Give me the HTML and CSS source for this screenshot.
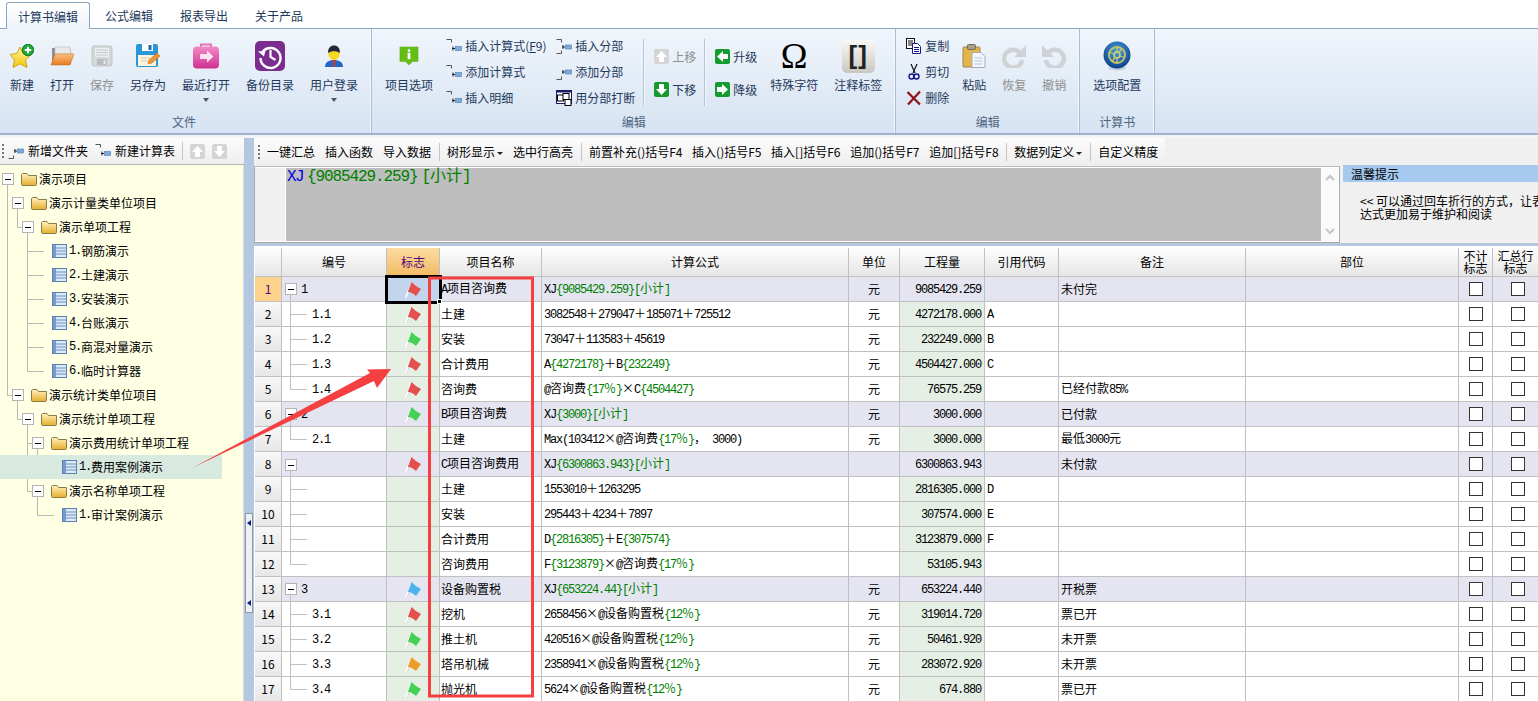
FILE: index.html
```html
<!DOCTYPE html>
<html lang="zh-CN">
<head>
<meta charset="utf-8">
<title>计算书编辑</title>
<link rel="stylesheet" href="styles.css">
</head>
<body>
<svg class="sprite" aria-hidden="true">
  <defs>
    <linearGradient id="gStar" x1="0" y1="0" x2="0" y2="1"><stop offset="0" stop-color="#fff59a"/><stop offset="1" stop-color="#f2c40a"/></linearGradient>
    <linearGradient id="gOrange" x1="0" y1="0" x2="0" y2="1"><stop offset="0" stop-color="#fbc27e"/><stop offset="1" stop-color="#e9791c"/></linearGradient>
    <linearGradient id="gPink" x1="0" y1="0" x2="0" y2="1"><stop offset="0" stop-color="#f48ac6"/><stop offset="1" stop-color="#cf2f91"/></linearGradient>
    <linearGradient id="gFolder" x1="0" y1="0" x2="0" y2="1"><stop offset="0" stop-color="#fff3bf"/><stop offset="1" stop-color="#e8ad2c"/></linearGradient>
    <radialGradient id="gBall" cx="0.5" cy="0.35" r="0.65"><stop offset="0" stop-color="#4aa3e0"/><stop offset="1" stop-color="#0b3f86"/></radialGradient>
  </defs>
  <symbol id="i-new" viewBox="0 0 24 24">
    <polygon points="10,3 13,9.500 21,10.500 15.500,16 17,23.500 10,19.800 3,23.500 4.500,16 0,10.500 7,9.500" fill="url(#gStar)" stroke="#cfa41a"/>
    <circle cx="18" cy="6" r="5.800" fill="#1fa83a" stroke="#0f7d27"/>
    <path d="M18 2.800v6.400M14.800 6h6.400" stroke="#fff" stroke-width="2"/>
  </symbol>
  <symbol id="i-open" viewBox="0 0 24 24">
    <path d="M2 4h7l2 2h10v14H2z" fill="#8f8f8f"/>
    <path d="M5 3l15 0 1 7H5z" fill="#e8e8e8" stroke="#b8b8b8" stroke-width=".6"/>
    <path d="M1 21L5 10h19l-4 11z" fill="url(#gOrange)" stroke="#b9682a" stroke-width=".5"/>
  </symbol>
  <symbol id="i-save" viewBox="0 0 24 24">
    <rect x="2" y="2" width="20" height="20" rx="2" fill="#d5d8da" stroke="#c2c5c8"/>
    <rect x="5" y="4" width="14" height="9" fill="#eceeef"/>
    <path d="M6 6h12M6 8.500h12M6 11h12" stroke="#c6c9cb"/>
    <rect x="7" y="15" width="10" height="6" fill="#b9bcbf"/>
    <rect x="13.500" y="16" width="2" height="4" fill="#e4e6e7"/>
  </symbol>
  <symbol id="i-saveas" viewBox="0 0 24 24">
    <rect x="0" y="0" width="22" height="23" rx="2" fill="#2b95d6"/>
    <rect x="6" y="0" width="11" height="7" fill="#fff"/>
    <rect x="12.500" y="1" width="3" height="5" fill="#1c6ca8"/>
    <rect x="2" y="11" width="18" height="11" fill="#fbf4dc"/>
    <path d="M5 14h9M5 17h7" stroke="#cfc8ae"/>
    <path d="M12 20l1-4 8-7 3 3-8 7z" fill="#ee9330" stroke="#c8621a" stroke-width=".5"/>
  </symbol>
  <symbol id="i-recent" viewBox="0 0 28 28">
    <path d="M9 5V2.500h10V5" fill="none" stroke="#e373b4" stroke-width="2"/>
    <rect x="1" y="4.500" width="26" height="22" rx="4" fill="url(#gPink)"/>
    <path d="M8 12h7V8.500l6.500 6L15 20.500V17H8z" fill="#fbe2f0"/>
  </symbol>
  <symbol id="i-backup" viewBox="0 0 30 30">
    <rect width="30" height="30" rx="5" fill="#7a2c8f"/>
    <path d="M7.500 11A10 10 0 1 1 5.500 17" fill="none" stroke="#fff" stroke-width="2.400"/>
    <path d="M3 10.500l7.500-1-1.500 6z" fill="#fff"/>
    <path d="M15.500 9v7l5 3" fill="none" stroke="#fff" stroke-width="2.200"/>
  </symbol>
  <symbol id="i-user" viewBox="0 0 20 24">
    <path d="M1 23c0-5 4-7 9-7s9 2 9 7z" fill="#2366c4"/>
    <path d="M8.500 16h3l-.8 7H9.300z" fill="#d83a2a"/>
    <ellipse cx="10" cy="9" rx="5.800" ry="7" fill="#f6d91d"/>
    <path d="M4.200 9C3.700 4 6.500 1.500 10 1.500S16.300 4 15.800 9C13 6.500 7 6.500 4.200 9z" fill="#23283a"/>
  </symbol>
  <symbol id="i-info" viewBox="0 0 22 24">
    <path d="M1 2h20v16h-6l-4 4-4-4H1z" fill="#65bd17" stroke="#5aa814" stroke-width=".5"/>
    <circle cx="11" cy="6" r="1.500" fill="#fff"/>
    <rect x="9.500" y="8.500" width="3" height="7" fill="#fff"/>
  </symbol>
  <symbol id="s-top" viewBox="0 0 16 16">
    <path d="M0.500 1.500h5v3" fill="none" stroke="#555"/>
    <path d="M6 10.500h3" stroke="#222"/>
    <path d="M7 8.500v4" stroke="#222" stroke-width="1"/>
    <rect x="9.500" y="8.500" width="6" height="4" fill="#7fa9dc" stroke="#5b84bb" stroke-width=".7"/>
  </symbol>
  <symbol id="s-both" viewBox="0 0 16 16">
    <path d="M0.500 1.500h5v3M0.500 15.500h5v-3" fill="none" stroke="#555"/>
    <path d="M6 9h3M7 7v4" stroke="#222"/>
    <rect x="9.500" y="7" width="6" height="4" fill="#7fa9dc" stroke="#5b84bb" stroke-width=".7"/>
  </symbol>
  <symbol id="s-bottom" viewBox="0 0 16 16">
    <path d="M0.500 15.500h5v-3" fill="none" stroke="#555"/>
    <path d="M6 8h3M7 6v4" stroke="#222"/>
    <rect x="9.500" y="6" width="6" height="4" fill="#7fa9dc" stroke="#5b84bb" stroke-width=".7"/>
  </symbol>
  <symbol id="s-break" viewBox="0 0 16 16">
    <rect x=".5" y=".5" width="15" height="13" fill="#fff" stroke="#1a1a6a"/>
    <rect x=".5" y=".5" width="15" height="2" fill="#1a1a6a"/>
    <rect x="1.500" y="5" width="6" height="6" fill="#fff" stroke="#000"/>
    <rect x="7" y="3.500" width="6" height="6" fill="#fff" stroke="#000"/>
    <rect x="9" y="9.500" width="6" height="6" fill="#fff" stroke="#000"/>
  </symbol>
  <symbol id="a-up" viewBox="0 0 15 15"><rect width="15" height="15" rx="2" fill="currentColor"/><path d="M7.500 2L13 8H10v5H5V8H2z" fill="#fff"/></symbol>
  <symbol id="a-down" viewBox="0 0 15 15"><rect width="15" height="15" rx="2" fill="currentColor"/><path d="M7.500 13L13 7H10V2H5v5H2z" fill="#fff"/></symbol>
  <symbol id="a-left" viewBox="0 0 15 15"><rect width="15" height="15" rx="2" fill="currentColor"/><path d="M2 7.500L8 2v3h5v5H8v3z" fill="#fff"/></symbol>
  <symbol id="a-right" viewBox="0 0 15 15"><rect width="15" height="15" rx="2" fill="currentColor"/><path d="M13 7.500L7 2v3H2v5h5v3z" fill="#fff"/></symbol>
  <symbol id="s-copy" viewBox="0 0 16 16">
    <rect x=".5" y=".5" width="8" height="10" fill="#fff" stroke="#111"/>
    <path d="M2 3h5M2 5h5M2 7h5" stroke="#111"/>
    <path d="M6.500 5.500h5l3 3v7h-8z" fill="#fff" stroke="#16168a"/>
    <path d="M8 9.500h5M8 11.500h5M8 13.500h5" stroke="#16168a"/>
  </symbol>
  <symbol id="s-cut" viewBox="0 0 16 16">
    <path d="M5 0l4 9M11 0L7 9" stroke="#111" stroke-width="1.200" fill="none"/>
    <circle cx="5.500" cy="12.500" r="2.500" fill="none" stroke="#16168a" stroke-width="1.400"/>
    <circle cx="10.500" cy="12.500" r="2.500" fill="none" stroke="#16168a" stroke-width="1.400"/>
  </symbol>
  <symbol id="s-del" viewBox="0 0 16 16">
    <path d="M1.500 2L14 14.500M14 1.500L2 14.500" stroke="#8c1313" stroke-width="2.200"/>
  </symbol>
  <symbol id="i-paste" viewBox="0 0 24 24">
    <rect x="1" y="3" width="17" height="20" rx="1" fill="#e3b54a" stroke="#9e8750"/>
    <rect x="5.500" y="0.500" width="8" height="5" rx="1" fill="#a9a08a" stroke="#6f6a5c"/>
    <path d="M10 8.500h9l4 4v11H10z" fill="#f6f7fa" stroke="#a7adb8"/>
    <path d="M12.500 14h8M12.500 17h8M12.500 20h8" stroke="#b7c4d6"/>
  </symbol>
  <symbol id="i-redo" viewBox="0 0 24 24">
    <path d="M18 9A9 9 0 1 0 20 16" fill="none" stroke="#d0d3d5" stroke-width="4.500"/>
    <path d="M24 1v12H12z" fill="#d0d3d5"/>
  </symbol>
  <symbol id="i-undo" viewBox="0 0 24 24">
    <path d="M6 9A9 9 0 1 1 4 16" fill="none" stroke="#d0d3d5" stroke-width="4.500"/>
    <path d="M0 1v12H12z" fill="#d0d3d5"/>
  </symbol>
  <symbol id="i-gear" viewBox="0 0 28 30">
    <ellipse cx="14" cy="27" rx="9" ry="2.500" fill="#c5d2de"/>
    <circle cx="14" cy="14" r="13.500" fill="url(#gBall)"/>
    <circle cx="14" cy="14" r="8" fill="none" stroke="#c9c566" stroke-width="1.800"/>
    <circle cx="14" cy="14" r="3" fill="none" stroke="#d9d56f" stroke-width="1.500"/>
    <path d="M14 6v5M14 17v5M6.400 11.500l4.700 1.500M17 15l4.600 1.500M9 20.500l3-4M16 11.500l3-4" stroke="#c9c566" stroke-width="1.300"/>
  </symbol>
  <symbol id="t-folder" viewBox="0 0 16 14">
    <path d="M.5 2.500V12.500c0 .5.500 1 1 1h13c.5 0 1-.5 1-1v-9h-8l-1.500-2H1.500z" fill="url(#gFolder)" stroke="#8a7a4a"/>
  </symbol>
  <symbol id="t-table" viewBox="0 0 15 14">
    <rect x=".5" y=".5" width="14" height="13" fill="#dce9f8" stroke="#5c7fb5"/>
    <rect x="1" y="1" width="3" height="12" fill="#7c9fd2"/>
    <path d="M1 4h13M1 7h13M1 10h13" stroke="#6d90c4"/>
  </symbol>
  <symbol id="flag" viewBox="0 0 17 17">
    <path d="M1 16.500L6.500 3" stroke="#fff" stroke-width="2"/>
    <path d="M2 16.500L7 4" stroke="#cfcfcf" stroke-width=".8"/>
    <path d="M6.500 1Q10 5 16 8L11 15Q6 10.500 2.800 11z" fill="currentColor"/>
  </symbol>
</svg>

<header class="tabs">
  <div class="tab on">计算书编辑</div>
  <div class="tab">公式编辑</div>
  <div class="tab">报表导出</div>
  <div class="tab">关于产品</div>
</header>

<section class="ribbon">
  <div class="group g1">
    <div class="gbody">
      <div class="big"><span class="ico"><svg class="i24"><use href="#i-new"/></svg></span><span class="lb">新建</span></div>
      <div class="big"><span class="ico"><svg class="i24"><use href="#i-open"/></svg></span><span class="lb">打开</span></div>
      <div class="big off"><span class="ico"><svg class="i24"><use href="#i-save"/></svg></span><span class="lb">保存</span></div>
      <div class="big"><span class="ico"><svg class="i24"><use href="#i-saveas"/></svg></span><span class="lb">另存为</span></div>
      <div class="big"><span class="ico"><svg class="i28"><use href="#i-recent"/></svg></span><span class="lb">最近打开</span><span class="car"></span></div>
      <div class="big"><span class="ico"><svg class="i30"><use href="#i-backup"/></svg></span><span class="lb">备份目录</span></div>
      <div class="big"><span class="ico"><svg class="iu"><use href="#i-user"/></svg></span><span class="lb">用户登录</span><span class="car"></span></div>
    </div>
    <div class="gname">文件</div>
  </div>
  <div class="group">
    <div class="gbody">
      <div class="big"><span class="ico"><svg class="iu"><use href="#i-info"/></svg></span><span class="lb">项目选项</span></div>
      <div class="col c1">
        <div class="sm"><svg class="i16"><use href="#s-top"/></svg><span>插入计算式(<u>F</u>9)</span></div>
        <div class="sm"><svg class="i16"><use href="#s-top"/></svg>添加计算式</div>
        <div class="sm"><svg class="i16"><use href="#s-top"/></svg>插入明细</div>
      </div>
      <div class="col c2">
        <div class="sm"><svg class="i16"><use href="#s-both"/></svg>插入分部</div>
        <div class="sm"><svg class="i16"><use href="#s-bottom"/></svg>添加分部</div>
        <div class="sm"><svg class="i16"><use href="#s-break"/></svg>用分部打断</div>
      </div>
      <div class="rsep"></div>
      <div class="col mv c3">
        <div class="sm off"><svg class="i15 gray"><use href="#a-up"/></svg>上移</div>
        <div class="sm"><svg class="i15 green"><use href="#a-down"/></svg>下移</div>
      </div>
      <div class="rsep"></div>
      <div class="col mv c4">
        <div class="sm"><svg class="i15 green"><use href="#a-left"/></svg>升级</div>
        <div class="sm"><svg class="i15 green"><use href="#a-right"/></svg>降级</div>
      </div>
      <div class="big"><span class="ico omega">Ω</span><span class="lb">特殊字符</span></div>
      <div class="big"><span class="ico"><span class="brk">[]</span></span><span class="lb">注释标签</span></div>
    </div>
    <div class="gname">编辑</div>
  </div>
  <div class="group">
    <div class="gbody">
      <div class="col c5">
        <div class="sm"><svg class="i16"><use href="#s-copy"/></svg>复制</div>
        <div class="sm"><svg class="i16"><use href="#s-cut"/></svg>剪切</div>
        <div class="sm"><svg class="i16"><use href="#s-del"/></svg>删除</div>
      </div>
      <div class="big"><span class="ico"><svg class="i24"><use href="#i-paste"/></svg></span><span class="lb">粘贴</span></div>
      <div class="big off"><span class="ico"><svg class="i24"><use href="#i-redo"/></svg></span><span class="lb">恢复</span></div>
      <div class="big off"><span class="ico"><svg class="i24"><use href="#i-undo"/></svg></span><span class="lb">撤销</span></div>
    </div>
    <div class="gname">编辑</div>
  </div>
  <div class="group">
    <div class="gbody">
      <div class="big"><span class="ico"><svg class="igear"><use href="#i-gear"/></svg></span><span class="lb">选项配置</span></div>
    </div>
    <div class="gname">计算书</div>
  </div>
</section>

<main class="main">
  <aside class="left">
    <div class="tb ltb">
      <span class="grip"></span>
      <span class="tbi"><svg class="i16"><use href="#s-bottom"/></svg>新增文件夹</span>
      <span class="tbi"><svg class="i16"><use href="#s-top"/></svg>新建计算表</span>
      <span class="tsep"></span>
      <svg class="i15 gray"><use href="#a-up"/></svg>
      <svg class="i15 gray"><use href="#a-down"/></svg>
    </div>
    <div class="tree">
      <svg class="tlines" width="244" height="536" viewBox="0 165 244 536" aria-hidden="true">
        <path d="M7.500 185V395.500H12M17.500 209V227.500H22M27.500 233V371.500H44M27.500 251.500H44M27.500 275.500H44M27.500 299.500H44M27.500 323.500H44M27.500 347.500H44M17.500 401V419.500H22M27.500 425V491.500H32M27.500 443.500H32M37.500 449V467.500H54M37.500 497V515.500H54" fill="none" stroke="#b9b9b9"/>
      </svg>
      <div class="node l0"><span class="ex"></span><svg class="fld"><use href="#t-folder"/></svg>演示项目</div>
      <div class="node l1"><span class="ex"></span><svg class="fld"><use href="#t-folder"/></svg>演示计量类单位项目</div>
      <div class="node l2"><span class="ex"></span><svg class="fld"><use href="#t-folder"/></svg>演示单项工程</div>
      <div class="node l2 leaf"><svg class="tbl"><use href="#t-table"/></svg><code>1.</code>钢筋演示</div>
      <div class="node l2 leaf"><svg class="tbl"><use href="#t-table"/></svg><code>2.</code>土建演示</div>
      <div class="node l2 leaf"><svg class="tbl"><use href="#t-table"/></svg><code>3.</code>安装演示</div>
      <div class="node l2 leaf"><svg class="tbl"><use href="#t-table"/></svg><code>4.</code>台账演示</div>
      <div class="node l2 leaf"><svg class="tbl"><use href="#t-table"/></svg><code>5.</code>商混对量演示</div>
      <div class="node l2 leaf"><svg class="tbl"><use href="#t-table"/></svg><code>6.</code>临时计算器</div>
      <div class="node l1"><span class="ex"></span><svg class="fld"><use href="#t-folder"/></svg>演示统计类单位项目</div>
      <div class="node l2"><span class="ex"></span><svg class="fld"><use href="#t-folder"/></svg>演示统计单项工程</div>
      <div class="node l3"><span class="ex"></span><svg class="fld"><use href="#t-folder"/></svg>演示费用统计单项工程</div>
      <div class="node l3 leaf cur"><svg class="tbl"><use href="#t-table"/></svg><code>1.</code>费用案例演示</div>
      <div class="node l3"><span class="ex"></span><svg class="fld"><use href="#t-folder"/></svg>演示名称单项工程</div>
      <div class="node l3 leaf"><svg class="tbl"><use href="#t-table"/></svg><code>1.</code>审计案例演示</div>
    </div>
  </aside>

  <div class="split"><div class="collapse"><span class="tri"></span><span class="tri"></span></div></div>

  <div class="right">
    <div class="tbwrap">
      <div class="tb rtb">
        <span class="grip"></span>
        <span>一键汇总</span><span>插入函数</span><span>导入数据</span>
        <span class="tsep"></span>
        <span>树形显示<span class="dd"></span></span><span>选中行高亮</span>
        <span class="tsep"></span>
        <span class="fk">前置补充()括号F4</span><span class="fk">插入()括号F5</span><span class="fk">插入[]括号F6</span><span class="fk">追加()括号F7</span><span class="fk">追加[]括号F8</span>
        <span class="tsep"></span>
        <span>数据列定义<span class="dd"></span></span>
        <span class="tsep"></span>
        <span>自定义精度</span>
      </div>
    </div>
    <div class="upper">
      <div class="fbox">
        <div class="gutter"></div>
        <div class="ftext"><span class="fx">XJ</span><span class="fg"><span class="fm">{9085429.259}</span><span class="fm fb">[</span>小计<span class="fm">]</span></span></div>
        <div class="vscroll">
          <svg width="10" height="7" viewBox="0 0 10 7"><path d="M1 6l4-4 4 4" fill="none" stroke="#c4c4c4" stroke-width="2"/></svg>
          <svg width="10" height="7" viewBox="0 0 10 7"><path d="M1 1l4 4 4-4" fill="none" stroke="#c4c4c4" stroke-width="2"/></svg>
        </div>
      </div>
      <div class="tip">
        <div class="tiph">温馨提示</div>
        <div class="tipb">&lt;&lt; 可以通过回车折行的方式，让表<br>达式更加易于维护和阅读</div>
      </div>
    </div>
    <div class="gridwrap">
      <table class="grid">
        <colgroup>
          <col class="c-h"><col class="c-no"><col class="c-fl"><col class="c-nm"><col class="c-fo"><col class="c-un"><col class="c-qt"><col class="c-cd"><col class="c-nt"><col class="c-pt"><col class="c-k1"><col class="c-k2">
        </colgroup>
        <thead>
          <tr><th></th><th>编号</th><th class="act">标志</th><th>项目名称</th><th>计算公式</th><th>单位</th><th>工程量</th><th>引用代码</th><th>备注</th><th>部位</th><th class="two">不计<br>标志</th><th class="two">汇总行<br>标志</th></tr>
        </thead>
        <tbody>
          <tr class="grp"><th class="rh act">1</th><td class="no par"><span class="ex"></span><code>1</code></td><td class="fl sel"><svg class="flag red"><use href="#flag"/></svg><span class="handle"></span></td><td class="nm"><code>A</code>项目咨询费</td><td class="fo"><code>XJ</code><span class="g"><code>{9085429.259}[</code>小计<code>]</code></span></td><td class="un">元</td><td class="qt"><code>9085429.259</code></td><td class="cd"></td><td class="nt">未付完</td><td></td><td class="k"><input type="checkbox"></td><td class="k k2"><input type="checkbox"></td></tr>
          <tr><th class="rh">2</th><td class="no ch"><code>1.1</code></td><td class="fl"><svg class="flag red"><use href="#flag"/></svg></td><td class="nm">土建</td><td class="fo"><code>3082548</code>＋<code>279047</code>＋<code>185071</code>＋<code>725512</code></td><td class="un">元</td><td class="qt"><code>4272178.000</code></td><td class="cd"><code>A</code></td><td class="nt"></td><td></td><td class="k"><input type="checkbox"></td><td class="k k2"><input type="checkbox"></td></tr>
          <tr><th class="rh">3</th><td class="no ch"><code>1.2</code></td><td class="fl"><svg class="flag green"><use href="#flag"/></svg></td><td class="nm">安装</td><td class="fo"><code>73047</code>＋<code>113583</code>＋<code>45619</code></td><td class="un">元</td><td class="qt"><code>232249.000</code></td><td class="cd"><code>B</code></td><td class="nt"></td><td></td><td class="k"><input type="checkbox"></td><td class="k k2"><input type="checkbox"></td></tr>
          <tr><th class="rh">4</th><td class="no ch"><code>1.3</code></td><td class="fl"><svg class="flag red"><use href="#flag"/></svg></td><td class="nm">合计费用</td><td class="fo"><code>A</code><span class="g"><code>{4272178}</code></span>＋<code>B</code><span class="g"><code>{232249}</code></span></td><td class="un">元</td><td class="qt"><code>4504427.000</code></td><td class="cd"><code>C</code></td><td class="nt"></td><td></td><td class="k"><input type="checkbox"></td><td class="k k2"><input type="checkbox"></td></tr>
          <tr><th class="rh">5</th><td class="no ch last"><code>1.4</code></td><td class="fl"><svg class="flag red"><use href="#flag"/></svg></td><td class="nm">咨询费</td><td class="fo"><code>@</code>咨询费<span class="g"><code>{17</code>％<code>}</code></span><span class="x">×</span><code>C</code><span class="g"><code>{4504427}</code></span></td><td class="un">元</td><td class="qt"><code>76575.259</code></td><td class="cd"></td><td class="nt">已经付款<code>85%</code></td><td></td><td class="k"><input type="checkbox"></td><td class="k k2"><input type="checkbox"></td></tr>
          <tr class="grp"><th class="rh">6</th><td class="no par"><span class="ex"></span><code>2</code></td><td class="fl"><svg class="flag green"><use href="#flag"/></svg></td><td class="nm"><code>B</code>项目咨询费</td><td class="fo"><code>XJ</code><span class="g"><code>{3000}[</code>小计<code>]</code></span></td><td class="un">元</td><td class="qt"><code>3000.000</code></td><td class="cd"></td><td class="nt">已付款</td><td></td><td class="k"><input type="checkbox"></td><td class="k k2"><input type="checkbox"></td></tr>
          <tr><th class="rh">7</th><td class="no ch last"><code>2.1</code></td><td class="fl"></td><td class="nm">土建</td><td class="fo"><code>Max(103412</code><span class="x">×</span><code>@</code>咨询费<span class="g"><code>{17</code>％<code>}</code></span>，<code>&nbsp;3000)</code></td><td class="un">元</td><td class="qt"><code>3000.000</code></td><td class="cd"></td><td class="nt">最低<code>3000</code>元</td><td></td><td class="k"><input type="checkbox"></td><td class="k k2"><input type="checkbox"></td></tr>
          <tr class="grp"><th class="rh">8</th><td class="no par"><span class="ex"></span></td><td class="fl"><svg class="flag red"><use href="#flag"/></svg></td><td class="nm"><code>C</code>项目咨询费用</td><td class="fo"><code>XJ</code><span class="g"><code>{6300863.943}[</code>小计<code>]</code></span></td><td class="un"></td><td class="qt"><code>6300863.943</code></td><td class="cd"></td><td class="nt">未付款</td><td></td><td class="k"><input type="checkbox"></td><td class="k k2"><input type="checkbox"></td></tr>
          <tr><th class="rh">9</th><td class="no ch"></td><td class="fl"></td><td class="nm">土建</td><td class="fo"><code>1553010</code>＋<code>1263295</code></td><td class="un"></td><td class="qt"><code>2816305.000</code></td><td class="cd"><code>D</code></td><td class="nt"></td><td></td><td class="k"><input type="checkbox"></td><td class="k k2"><input type="checkbox"></td></tr>
          <tr><th class="rh">10</th><td class="no ch"></td><td class="fl"></td><td class="nm">安装</td><td class="fo"><code>295443</code>＋<code>4234</code>＋<code>7897</code></td><td class="un"></td><td class="qt"><code>307574.000</code></td><td class="cd"><code>E</code></td><td class="nt"></td><td></td><td class="k"><input type="checkbox"></td><td class="k k2"><input type="checkbox"></td></tr>
          <tr><th class="rh">11</th><td class="no ch"></td><td class="fl"></td><td class="nm">合计费用</td><td class="fo"><code>D</code><span class="g"><code>{2816305}</code></span>＋<code>E</code><span class="g"><code>{307574}</code></span></td><td class="un"></td><td class="qt"><code>3123879.000</code></td><td class="cd"><code>F</code></td><td class="nt"></td><td></td><td class="k"><input type="checkbox"></td><td class="k k2"><input type="checkbox"></td></tr>
          <tr><th class="rh">12</th><td class="no ch last"></td><td class="fl"></td><td class="nm">咨询费用</td><td class="fo"><code>F</code><span class="g"><code>{3123879}</code></span><span class="x">×</span><code>@</code>咨询费<span class="g"><code>{17</code>％<code>}</code></span></td><td class="un"></td><td class="qt"><code>53105.943</code></td><td class="cd"></td><td class="nt"></td><td></td><td class="k"><input type="checkbox"></td><td class="k k2"><input type="checkbox"></td></tr>
          <tr class="grp"><th class="rh">13</th><td class="no par"><span class="ex"></span><code>3</code></td><td class="fl"><svg class="flag blue"><use href="#flag"/></svg></td><td class="nm">设备购置税</td><td class="fo"><code>XJ</code><span class="g"><code>{653224.44}[</code>小计<code>]</code></span></td><td class="un">元</td><td class="qt"><code>653224.440</code></td><td class="cd"></td><td class="nt">开税票</td><td></td><td class="k"><input type="checkbox"></td><td class="k k2"><input type="checkbox"></td></tr>
          <tr><th class="rh">14</th><td class="no ch"><code>3.1</code></td><td class="fl"><svg class="flag red"><use href="#flag"/></svg></td><td class="nm">挖机</td><td class="fo"><code>2658456</code><span class="x">×</span><code>@</code>设备购置税<span class="g"><code>{12</code>％<code>}</code></span></td><td class="un">元</td><td class="qt"><code>319014.720</code></td><td class="cd"></td><td class="nt">票已开</td><td></td><td class="k"><input type="checkbox"></td><td class="k k2"><input type="checkbox"></td></tr>
          <tr><th class="rh">15</th><td class="no ch"><code>3.2</code></td><td class="fl"><svg class="flag green"><use href="#flag"/></svg></td><td class="nm">推土机</td><td class="fo"><code>420516</code><span class="x">×</span><code>@</code>设备购置税<span class="g"><code>{12</code>％<code>}</code></span></td><td class="un">元</td><td class="qt"><code>50461.920</code></td><td class="cd"></td><td class="nt">未开票</td><td></td><td class="k"><input type="checkbox"></td><td class="k k2"><input type="checkbox"></td></tr>
          <tr><th class="rh">16</th><td class="no ch"><code>3.3</code></td><td class="fl"><svg class="flag orange"><use href="#flag"/></svg></td><td class="nm">塔吊机械</td><td class="fo"><code>2358941</code><span class="x">×</span><code>@</code>设备购置税<span class="g"><code>{12</code>％<code>}</code></span></td><td class="un">元</td><td class="qt"><code>283072.920</code></td><td class="cd"></td><td class="nt">未开票</td><td></td><td class="k"><input type="checkbox"></td><td class="k k2"><input type="checkbox"></td></tr>
          <tr><th class="rh">17</th><td class="no ch last"><code>3.4</code></td><td class="fl"><svg class="flag green"><use href="#flag"/></svg></td><td class="nm">抛光机</td><td class="fo"><code>5624</code><span class="x">×</span><code>@</code>设备购置税<span class="g"><code>{12</code>％<code>}</code></span></td><td class="un">元</td><td class="qt"><code>674.880</code></td><td class="cd"></td><td class="nt">票已开</td><td></td><td class="k"><input type="checkbox"></td><td class="k k2"><input type="checkbox"></td></tr>
        </tbody>
      </table>
    </div>
  </div>
</main>

<svg class="annot" viewBox="0 0 1538 701" aria-hidden="true">
  <rect x="429.500" y="278" width="103" height="418" fill="none" stroke="#f44040" stroke-width="3"/>
  <polygon points="193,467.500 370,373 367,369.500 391,369 377,388 374,381" fill="#f44040"/>
</svg>
</body>
</html>
```
FILE: styles.css
```css
* { box-sizing: border-box; }
html, body { margin: 0; padding: 0; }
body {
  position: relative;
  width: 1538px;
  height: 701px;
  overflow: hidden;
  display: flex;
  flex-direction: column;
  background: #fff;
  color: #000;
  font: 12px/16px "Noto Sans CJK SC", sans-serif;
}
.sprite { position: absolute; width: 0; height: 0; }
code {
  font-family: "Liberation Mono", monospace;
  font-size: 12px;
  letter-spacing: -1.2px;
}

/* tabs */
.tabs { height: 28px; display: flex; align-items: flex-end; gap: 3px; padding-left: 6px; background: #fff; flex: none; }
.tab { height: 26px; padding: 2px 12px 0; line-height: 24px; color: #1e395b; }
.tab.on {
  position: relative;
  z-index: 1;
  height: 27px;
  margin-bottom: -1px;
  border: 1px solid #8ba5c5;
  border-bottom: 0;
  border-radius: 3px 3px 0 0;
  padding: 2px 11px 0;
  background: linear-gradient(#fff, #eef4fb);
}

/* ribbon */
.ribbon {
  height: 107px;
  flex: none;
  display: flex;
  border-top: 1px solid #8ba5c5;
  border-bottom: 2px solid #9fb3cd;
  background: linear-gradient(#f0f5fb, #d6e3f2);
  color: #1e395b;
}
.group { display: flex; flex-direction: column; border-right: 1px solid #a9bdd6; padding: 4px 5px 2px; box-shadow: inset -1px 0 0 #f3f7fc; }
.group.g1 { padding-left: 2px; }
.gbody { display: flex; flex: 1; }
.gname { height: 18px; line-height: 18px; text-align: center; color: #4c6480; }
.big { display: flex; flex-direction: column; align-items: center; padding: 5px 8px 0; }
.ico { height: 36px; display: flex; align-items: center; justify-content: center; }
.lb { margin-top: 3px; white-space: nowrap; }
.car { width: 0; height: 0; margin-top: 5px; border: 3px solid transparent; border-top: 4px solid #555; border-bottom: 0; }
.off { color: #8f8f8f; }
.i24 { width: 24px; height: 24px; }
.i28 { width: 28px; height: 28px; }
.i30 { width: 30px; height: 30px; }
.iu { width: 20px; height: 24px; }
.igear { width: 28px; height: 30px; }
.i16 { width: 16px; height: 16px; flex: none; }
.i15 { width: 15px; height: 15px; flex: none; }
.gray { color: #d4d4d4; }
.green { color: #149a2e; }
.omega { font: 36px/36px "Liberation Serif", serif; color: #000; }
.brk {
  width: 33px;
  height: 33px;
  border-radius: 5px;
  background: linear-gradient(#f8f8f6, #c9c7c1);
  color: #222;
  font: bold 26px/30px "Liberation Sans", sans-serif;
  letter-spacing: 1px;
  text-align: center;
}
.col { display: flex; flex-direction: column; }
.sm { height: 26px; display: flex; align-items: center; gap: 3px; white-space: nowrap; }
.c1 { width: 110px; margin-left: 5px; }
.c2 { width: 87px; }
.c5 { width: 48px; margin-left: 5px; }
.mv { padding-top: 7px; }
.mv .sm { height: 33px; }
.c3 { width: 50px; margin-left: 10px; }
.c4 { width: 47px; margin-left: 10px; }
.rsep { width: 1px; height: 67px; margin-top: 6px; background: #b4c4d8; box-shadow: 1px 0 0 #f3f7fc; }

/* layout below the ribbon */
.main { flex: 1; min-height: 0; display: flex; padding-top: 3px; background: #f2f4f7; }
.left { width: 244px; flex: none; display: flex; flex-direction: column; }
.tb { height: 27px; display: flex; align-items: center; background: linear-gradient(#fcfcfc, #eeeeee); white-space: nowrap; }
.grip { width: 2px; height: 14px; background: repeating-linear-gradient(#777 0 2px, transparent 2px 4px); }
.tsep { width: 1px; height: 18px; background: #c4c4c4; }
.ltb { gap: 7px; padding-left: 2px; border-bottom: 1px solid #b5b5b5; }
.ltb .grip { margin-right: -3px; }
.tbi { display: flex; align-items: center; gap: 4px; }
.tree { position: relative; flex: 1; background: #ffffe3; padding-top: 2px; border-right: 1px solid #ddd; }
.tlines { position: absolute; left: 0; top: 0; }
.node { position: relative; height: 24px; display: flex; align-items: center; white-space: nowrap; }
.l0 { padding-left: 2px; }
.l1 { padding-left: 12px; }
.l2 { padding-left: 22px; }
.l3 { padding-left: 32px; }
.leaf { margin-left: 30px; padding-left: 0; }
.l2.leaf { margin-left: 52px; padding-left: 0; }
.l3.leaf { margin-left: 0; padding-left: 62px; width: 222px; }
.cur { background: #d8e9e0; }
.ex {
  display: inline-block;
  width: 12px;
  height: 12px;
  flex: none;
  border: 1px solid #b4b4b4;
  background: linear-gradient(#000, #000) center / 6px 1px no-repeat, #fff;
}
.fld { width: 16px; height: 14px; margin: 0 2px 0 7px; flex: none; }
.tbl { width: 15px; height: 14px; margin-right: 2px; flex: none; }

.split { width: 10px; flex: none; padding: 375px 0 0 1px; background: #b3c7e1; }
.collapse {
  width: 8px;
  height: 100px;
  display: flex;
  flex-direction: column;
  justify-content: space-between;
  align-items: center;
  padding: 6px 0;
  background: #eef0f3;
  border: 1px solid #8f9aa8;
}
.tri { width: 0; height: 0; border: 3px solid transparent; border-right: 4px solid #0a1f8f; border-left: 0; }

.right { flex: 1; min-width: 0; display: flex; flex-direction: column; background: #b3c7e1; overflow: hidden; }
.tbwrap { background: #f0f0f0; flex: none; }
.rtb { width: 911px; gap: 10px; padding-left: 4px; color: #000; }
.rtb .grip { margin-right: -3px; }
.rtb .tsep { margin: 0 -2.5px; }
.fk { margin-right: -.4px; }
.dd { display: inline-block; width: 0; height: 0; margin-left: 2px; vertical-align: 2px; border: 3px solid transparent; border-top: 3px solid #222; border-bottom: 0; }

.upper { height: 78px; flex: none; display: flex; background: #f0f0f0; }
.fbox { width: 1086px; flex: none; display: flex; margin-top: 1px; border: 1px solid #a9a9a9; border-top-color: #bbb; background: #fff; padding: 1px 1px 1px 0; }
.gutter { width: 31px; background: #f0f0f0; border-right: 1px solid #fff; }
.ftext { flex: 1; background: #bebebe; padding: 0 0 0 1px; font-size: 16px; line-height: 12px; white-space: nowrap; }
.fx { color: #0000e6; font: 16px/12px "Liberation Mono", monospace; letter-spacing: -1.6px; margin-right: 4px; }
.fg { color: #008000; }
.fm { font: 16px/12px "Liberation Mono", monospace; letter-spacing: -1.1px; }
.fb { margin-left: 4px; }
.vscroll { width: 17px; display: flex; flex-direction: column; justify-content: space-between; align-items: center; padding: 6px 0 6px; background: #fafafa; }
.tip { flex: 1; min-width: 0; padding-left: 3px; overflow: hidden; }
.tiph { height: 17px; padding-left: 8px; background: #a6c9ef; line-height: 17px; }
.tipb { padding: 12px 0 0 17px; line-height: 13px; white-space: nowrap; }

.gridwrap { flex: 1; min-height: 0; margin-top: 3px; padding: 2px 0 0 1px; background: #fff; overflow: hidden; }
.grid { width: 1284px; table-layout: fixed; border-collapse: separate; border-spacing: 0; }
.c-h { width: 27px; }
.c-no { width: 105px; }
.c-fl { width: 53px; }
.c-nm { width: 102px; }
.c-fo { width: 307px; }
.c-un { width: 51px; }
.c-qt { width: 85px; }
.c-cd { width: 74px; }
.c-nt { width: 187px; }
.c-pt { width: 213px; }
.c-k1 { width: 34px; }
.c-k2 { width: 46px; }
.grid th, .grid td { padding: 0; border-right: 1px solid #c0c0c0; border-bottom: 1px solid #c0c0c0; height: 25px; white-space: nowrap; overflow: hidden; vertical-align: middle; font-weight: 400; line-height: 16px; }
.grid thead th { height: 29px; background: linear-gradient(#fdfdfd, #e6e6e6); }
.grid thead th.act { background: linear-gradient(#fcdca2, #f2ba62); color: #55007a; }
.grid thead .two { line-height: 12px; }
.grid .rh { background: linear-gradient(#f8f8f8, #e6e6e6); }
.grid .rh.act { background: #fdd28c; color: #55007a; }
.grp td { background: #e4e5f1; }
.no { text-align: left; }
.ch {
  padding-left: 30px !important;
  background:
    linear-gradient(#c0c0c0, #c0c0c0) 8px 0 / 1px 100% no-repeat,
    linear-gradient(#c0c0c0, #c0c0c0) 9px 12px / 16px 1px no-repeat;
}
.ch.last { background-size: 1px 13px, 16px 1px; }
.grp .par {
  padding-left: 3px;
  background: linear-gradient(#c0c0c0, #c0c0c0) 8px 100% / 1px 6px no-repeat, #e4e5f1;
}
.par .ex { vertical-align: -2px; margin-right: 4px; }
.fl { text-align: center; background: #e6efe4; }
.fl.sel { position: relative; overflow: visible !important; background: #c2d5ec; outline: 3px solid #000; outline-offset: -1px; }
.handle { position: absolute; right: -3px; bottom: -3px; width: 5px; height: 5px; background: #000; border: 1px solid #fff; }
.flag { display: block; width: 17px; height: 17px; margin: 0 auto; }
.flag.red { color: #e4504f; }
.flag.green { color: #45d155; }
.flag.blue { color: #4fb2ec; }
.flag.orange { color: #ee9d28; }
.nm { padding-left: 1px !important; }
.fo { padding-left: 2px !important; }
.g { color: #008000; }
.x { display: inline-block; width: 12px; text-align: center; }
.un { text-align: center; }
.qt { text-align: right; padding-right: 3px !important; background: #e5efe5; }
.grp .qt { background: #e4e5f1; }
.cd { padding-left: 2px !important; }
.nt { padding-left: 2px !important; }
.k { text-align: center; }
.k2 { padding-left: 4px !important; }
.k input { appearance: none; display: block; width: 14px; height: 14px; margin: 0 auto; border: 1px solid #333; background: #fff; }

.annot { position: absolute; left: 0; top: 0; width: 1538px; height: 701px; pointer-events: none; z-index: 5; }
```
